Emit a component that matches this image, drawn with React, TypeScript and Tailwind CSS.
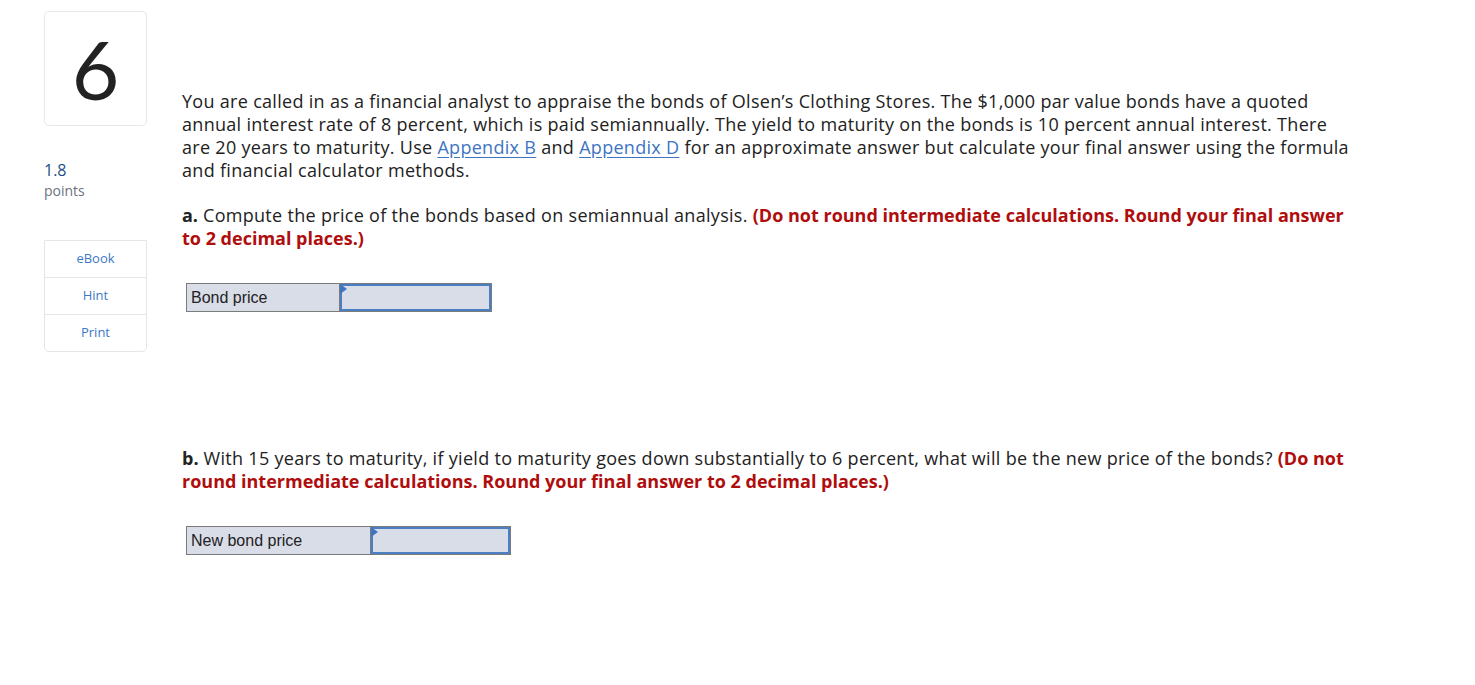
const FieldRow = (props: any) => {
    return <div className="flex h-[29px]">
        <div className="flex items-center bg-[#d9dde8] border border-[#7b7b7b] pl-[4px] text-[16px] text-[#222] font-['Liberation_Sans',Arial,sans-serif]" style={{ width: props.labelW }}>
            {props.label}
        </div>
        <div className="border border-l-0 border-[#7b7b7b] bg-[#d9dde8]" style={{ width: props.inputW }}>
            <div className="relative h-full border-2 border-[#4a7fc4]">
                <div className="absolute -left-[2px] -top-[2px] w-0 h-0 border-t-[5px] border-b-[5px] border-l-[7px] border-t-transparent border-b-transparent border-l-[#3f74c0]"></div>
            </div>
        </div>
    </div>
}

const App = () => {
    return <div className="min-h-screen bg-white flex font-['Open_Sans',sans-serif] text-[#222]">
        <div className="w-[103px] ml-[44px] pt-[11px] flex flex-col">
            <div className="h-[115px] border border-[#e8e8e8] rounded-[5px] flex items-center justify-center text-[82px] leading-none text-[#222] font-['Lato',sans-serif] pb-[2px]">6</div>
            <div className="mt-[34px] text-[16px] leading-[20px] text-[#1b4f8a]">1.8</div>
            <div className="text-[14px] leading-[20px] text-[#6b7280] mt-[1px]">points</div>
            <div className="mt-[39px] border border-[#e6e6e6] rounded-b-[5px] flex flex-col text-[13px] text-[#3d78c6]">
                <div className="h-[37px] flex items-center justify-center border-b border-[#e6e6e6]">eBook</div>
                <div className="h-[37px] flex items-center justify-center border-b border-[#e6e6e6]">Hint</div>
                <div className="h-[36px] flex items-center justify-center">Print</div>
            </div>
        </div>
        <div className="ml-[35px] pt-[90px] w-[1175px] text-[18px] leading-[23px] tracking-[0.3px]">
            <p>
                You are called in as a financial analyst to appraise the bonds of Olsen’s Clothing Stores. The $1,000 par value bonds have a quoted annual interest rate of 8 percent, which is paid semiannually. The yield to maturity on the bonds is 10 percent annual interest. There are 20 years to maturity. Use <span className="text-[#3d75c2] underline underline-offset-[3px]">Appendix B</span> and <span className="text-[#3d75c2] underline underline-offset-[3px]">Appendix D</span> for an approximate answer but calculate your final answer using the formula and financial calculator methods.
            </p>
            <p className="mt-[22px]">
                <b className="font-bold tracking-normal">a.</b> Compute the price of the bonds based on semiannual analysis. <b className="font-bold tracking-normal text-[#b00d0d]">(Do not round intermediate calculations. Round your final answer to 2 decimal places.)</b>
            </p>
            <div className="mt-[33px] ml-[4px] tracking-normal">
                <FieldRow label="Bond price" labelW={154} inputW={152} />
            </div>
            <p className="mt-[135px]">
                <b className="font-bold tracking-normal">b.</b> With 15 years to maturity, if yield to maturity goes down substantially to 6 percent, what will be the new price of the bonds? <b className="font-bold tracking-normal text-[#b00d0d]">(Do not round intermediate calculations. Round your final answer to 2 decimal places.)</b>
            </p>
            <div className="mt-[33px] ml-[4px] tracking-normal">
                <FieldRow label="New bond price" labelW={185} inputW={140} />
            </div>
        </div>
    </div>
}

export default App;
